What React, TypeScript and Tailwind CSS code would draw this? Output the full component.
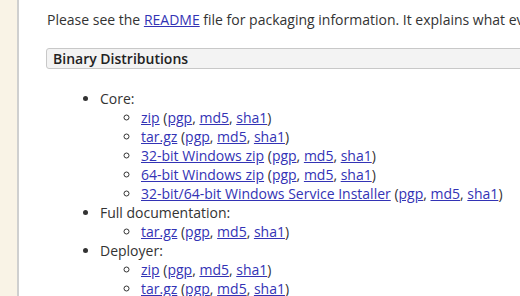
const links = ["pgp", "md5", "sha1"];

function Sigs() {
  return (
    <>
      {" ("}
      {links.map((l, i) => (
        <span key={l}>
          <a href="#" className="text-[#3333b5] underline">
            {l}
          </a>
          {i < links.length - 1 ? ", " : ""}
        </span>
      ))}
      {")"}
    </>
  );
}

const sections = [
  {
    name: "Core:",
    items: [
      "zip",
      "tar.gz",
      "32-bit Windows zip",
      "64-bit Windows zip",
      "32-bit/64-bit Windows Service Installer",
    ],
  },
  { name: "Full documentation:", items: ["tar.gz"] },
  { name: "Deployer:", items: ["zip", "tar.gz"] },
];

export default function App() {
  return (
    <div
      className="flex h-[296px] w-[520px] overflow-hidden bg-[#f9f3e6] text-[14px] leading-[19px] text-[#333]"
      style={{ fontFamily: '"Open Sans", sans-serif' }}
    >
      <div className="w-[17px] shrink-0" />
      <div className="w-[2px] shrink-0 bg-[#cfcfcf]" />
      <div className="min-w-[700px] flex-1 bg-white pl-[28px] pt-[10px]">
        <p className="whitespace-nowrap">
          Please see the{" "}
          <a href="#" className="text-[#3333b5] underline">
            README
          </a>{" "}
          file for packaging information. It explains what every distribution contains.
        </p>
        <div className="mt-[19px] -ml-px h-[21px] rounded-l-[3px] border border-[#c8c8c8] bg-[#f3f3f3] pl-[6px] font-semibold leading-[19px] text-[#222]">
          Binary Distributions
        </div>
        <ul className="mt-[20px] list-disc pl-[53px]">
          {sections.map((s) => (
            <li key={s.name}>
              {s.name}
              <ul className="list-[circle] pl-[41px]">
                {s.items.map((it, i) => (
                  <li key={i} className="whitespace-nowrap">
                    <a href="#" className="text-[#3333b5] underline">
                      {it}
                    </a>
                    <Sigs />
                  </li>
                ))}
              </ul>
            </li>
          ))}
        </ul>
      </div>
    </div>
  );
}
